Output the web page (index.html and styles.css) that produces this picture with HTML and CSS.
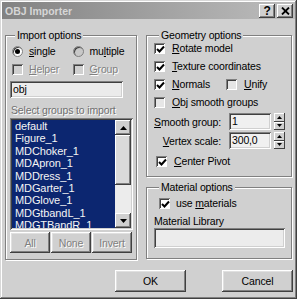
FILE: index.html
```html
<!DOCTYPE html>
<html>
<head>
<meta charset="utf-8">
<link rel="stylesheet" href="styles.css">
</head>
<body>
<div class="window">
  <div class="titlebar">
    <span class="title">OBJ Importer</span>
    <div class="tbtns">
      <span class="tbtn q">?</span>
      <span class="tbtn"><svg width="9" height="8" viewBox="0 0 9 8"><path d="M1 0.5 L8 7.5 M8 0.5 L1 7.5" stroke="#000" stroke-width="1.8" fill="none"/></svg></span>
    </div>
  </div>
  <div class="content">
    <div class="group left">
      <div class="legend">Import options</div>
      <div class="row r-radio">
        <div class="opt"><span class="radio on"></span><span><u>s</u>ingle</span></div>
        <div class="opt"><span class="radio"></span><span>mu<u>l</u>tiple</span></div>
      </div>
      <div class="row r-check">
        <div class="opt"><span class="cb dis"></span><span class="distext"><u>H</u>elper</span></div>
        <div class="opt"><span class="cb dis"></span><span class="distext"><u>G</u>roup</span></div>
      </div>
      <div class="field objfield">obj</div>
      <div class="sel distext">Select groups to import</div>
      <div class="list">
        <div class="items">
          <div class="item">default</div>
          <div class="item">Figure_1</div>
          <div class="item">MDChoker_1</div>
          <div class="item">MDApron_1</div>
          <div class="item">MDDress_1</div>
          <div class="item">MDGarter_1</div>
          <div class="item">MDGlove_1</div>
          <div class="item">MDGtbandL_1</div>
          <div class="item">MDGTBandR_1</div>
        </div>
        <div class="sbar">
          <div class="sbtn"><svg width="7" height="4" viewBox="0 0 7 4"><path d="M0 4 L3.5 0 L7 4 Z" fill="#000"/></svg></div>
          <div class="thumb"></div>
          <div class="track"></div>
          <div class="sbtn"><svg width="7" height="4" viewBox="0 0 7 4"><path d="M0 0 L3.5 4 L7 0 Z" fill="#000"/></svg></div>
        </div>
      </div>
      <div class="lbtns">
        <div class="btn small distext">All</div>
        <div class="btn small distext">None</div>
        <div class="btn small distext">Invert</div>
      </div>
    </div>
    <div class="rightcol">
      <div class="group geo">
        <div class="legend">Geometry options</div>
        <div class="row gr"><span class="cb"><svg width="9" height="9" viewBox="0 0 9 9"><path d="M1 4 L3.5 6.5 L8 1.5" stroke="#000" stroke-width="2" fill="none"/></svg></span><span><u>R</u>otate model</span></div>
        <div class="row gr"><span class="cb"><svg width="9" height="9" viewBox="0 0 9 9"><path d="M1 4 L3.5 6.5 L8 1.5" stroke="#000" stroke-width="2" fill="none"/></svg></span><span><u>T</u>exture coordinates</span></div>
        <div class="row gr">
          <div class="gopt"><span class="cb"><svg width="9" height="9" viewBox="0 0 9 9"><path d="M1 4 L3.5 6.5 L8 1.5" stroke="#000" stroke-width="2" fill="none"/></svg></span><span><u>N</u>ormals</span></div>
          <div class="gopt"><span class="cb light"></span><span><u>U</u>nify</span></div>
        </div>
        <div class="row gr"><span class="cb light"></span><span><u>O</u>bj smooth groups</span></div>
        <div class="srow first">
          <span class="slabel"><u>S</u>mooth group:</span>
          <span class="field spin">1</span>
          <span class="spinner"><span class="sp"><svg width="5" height="3" viewBox="0 0 5 3"><path d="M0 3 L2.5 0 L5 3 Z" fill="#000"/></svg></span><span class="sp"><svg width="5" height="3" viewBox="0 0 5 3"><path d="M0 0 L2.5 3 L5 0 Z" fill="#000"/></svg></span></span>
        </div>
        <div class="srow">
          <span class="slabel"><u>V</u>ertex scale:</span>
          <span class="field spin">300,0</span>
          <span class="spinner"><span class="sp"><svg width="5" height="3" viewBox="0 0 5 3"><path d="M0 3 L2.5 0 L5 3 Z" fill="#000"/></svg></span><span class="sp"><svg width="5" height="3" viewBox="0 0 5 3"><path d="M0 0 L2.5 3 L5 0 Z" fill="#000"/></svg></span></span>
        </div>
        <div class="row gr pivot"><span class="cb"><svg width="9" height="9" viewBox="0 0 9 9"><path d="M1 4 L3.5 6.5 L8 1.5" stroke="#000" stroke-width="2" fill="none"/></svg></span><span><u>C</u>enter Pivot</span></div>
      </div>
      <div class="group mat">
        <div class="legend">Material options</div>
        <div class="row gr usemat"><span class="cb"><svg width="9" height="9" viewBox="0 0 9 9"><path d="M1 4 L3.5 6.5 L8 1.5" stroke="#000" stroke-width="2" fill="none"/></svg></span><span>use <u>m</u>aterials</span></div>
        <div class="mlabel">Material Library</div>
        <div class="field mfield"></div>
      </div>
    </div>
  </div>
  <div class="footer">
    <div class="btn big">OK</div>
    <div class="btn big">Cancel</div>
  </div>
</div>
</body>
</html>
```

FILE: styles.css
```css
* { box-sizing: border-box; }
body {
  margin: 0;
  background: #d0d0d0;
  font-family: "Liberation Sans", Arial, sans-serif;
  font-size: 10.5px;
  letter-spacing: -0.15px;
  color: #000;
}
u { text-decoration: underline; text-underline-offset: 1px; }
.window {
  width: 297px;
  height: 299px;
  padding: 2px;
  background: #d0d0d0;
  box-shadow: inset -1px -1px #404040, inset 1px 1px #d8d8d8, inset -2px -2px #808080, inset 2px 2px #fff;
  display: flex;
  flex-direction: column;
}
.titlebar {
  height: 17px;
  flex: none;
  background: linear-gradient(to right, #828282, #bdbdbd);
  display: flex;
  align-items: center;
  justify-content: space-between;
  padding: 0 2px 0 3px;
}
.title { color: #d6d6d6; font-weight: bold; font-size: 10.5px; letter-spacing: 0; }
.tbtns { display: flex; gap: 2px; }
.tbtn {
  width: 16px;
  height: 14px;
  background: #d0d0d0;
  box-shadow: inset -1px -1px #404040, inset 1px 1px #fff, inset -2px -2px #808080;
  display: flex;
  align-items: center;
  justify-content: center;
  font-weight: bold;
  font-size: 12px;
  line-height: 14px;
}
.content {
  display: flex;
  gap: 9px;
  padding: 16px 3px 0;
  height: 241px;
  flex: none;
}
.group {
  border: 1px solid #808080;
  box-shadow: inset 1px 1px #fff, 1px 1px #fff;
  display: flex;
  flex-direction: column;
}
.legend {
  align-self: flex-start;
  margin: -7px 0 0 5px;
  padding: 0 2px;
  background: #d0d0d0;
  line-height: 13px;
  height: 13px;
}
.left {
  width: 132px;
  height: 225px;
  padding: 0 3px 0 4px;
}
.row { display: flex; align-items: center; height: 13px; line-height: 13px; }
.r-radio { margin-top: 3px; padding-left: 2px; }
.r-check { margin-top: 5px; padding-left: 2px; }
.opt { width: 61px; display: flex; align-items: center; gap: 6px; }
.radio {
  width: 11px;
  height: 11px;
  border-radius: 50%;
  background: #fff;
  border: 1px solid #808080;
  box-shadow: inset 1px 1px #404040;
  flex: none;
  display: flex;
  align-items: center;
  justify-content: center;
}
.radio.on::after {
  content: "";
  width: 5px;
  height: 5px;
  border-radius: 50%;
  background: #000;
}
.radio:not(.on) { background: #c8c8c8; }
.cb {
  width: 11px;
  height: 11px;
  flex: none;
  background: #fff;
  box-shadow: inset 1px 1px #808080, inset -1px -1px #fff, inset 2px 2px #404040;
  display: flex;
  align-items: center;
  justify-content: center;
}
.cb svg { margin: 1px 0 0 1px; }
.cb.dis { background: #d0d0d0; }
.cb.light { background: #e6e6e6; }
.distext { color: #808080; text-shadow: 1px 1px #fff; }
.field {
  background: #ebebeb;
  box-shadow: inset 1px 1px #808080, inset -1px -1px #fff, inset 2px 2px #404040, inset -2px -2px #d0d0d0;
  padding: 0 3px;
  line-height: 17px;
}
.objfield { width: 113px; height: 17px; margin-top: 5px; }
.sel { margin: 6px 0 0 1px; line-height: 13px; height: 13px; color: #707070; }
.list {
  margin-top: 1px;
  height: 112px;
  display: flex;
  padding: 2px;
  background: #0c2670;
  box-shadow: inset 1px 1px #808080, inset -1px -1px #fff, inset 2px 2px #404040, inset -2px -2px #d0d0d0;
}
.items { flex: 1; overflow: hidden; padding-left: 3px; }
.item { color: #f4f4f4; line-height: 12.4px; height: 12.4px; white-space: nowrap; font-size: 11px; letter-spacing: -0.1px; }
.sbar { width: 16px; display: flex; flex-direction: column; }
.sbtn {
  height: 15px;
  flex: none;
  background: #d0d0d0;
  box-shadow: inset -1px -1px #404040, inset 1px 1px #fff, inset -2px -2px #808080;
  display: flex;
  align-items: center;
  justify-content: center;
}
.thumb {
  height: 50px;
  background: #dadada;
  box-shadow: inset -1px -1px #404040, inset 1px 1px #fff, inset -2px -2px #808080;
}
.track { flex: 1; background: #ececec; }
.lbtns { display: flex; gap: 1px; margin-top: 2px; }
.btn {
  background: #d0d0d0;
  box-shadow: inset -1px -1px #404040, inset 1px 1px #fff, inset -2px -2px #808080, inset 2px 2px #e0e0e0;
  display: flex;
  align-items: center;
  justify-content: center;
}
.small { width: 40px; height: 21px; }
.rightcol { display: flex; flex-direction: column; width: 146px; }
.geo { height: 142px; padding: 0 0 0 7px; }
.gr { gap: 7px; }
.geo .gr:first-of-type { margin-top: 3px; }
.geo .gr + .gr { margin-top: 5px; }
.gopt { display: flex; align-items: center; gap: 7px; width: 74px; }
.srow { display: flex; align-items: center; height: 17px; margin-top: 2px; }
.srow.first { margin-top: 4px; }
.slabel { width: 67px; text-align: right; margin-right: 8px; white-space: nowrap; }
.spin { width: 42px; height: 17px; background: #f0f0f0; }
.spinner { display: flex; flex-direction: column; margin-left: 3px; width: 11px; height: 17px; }
.sp {
  flex: 1;
  background: #d0d0d0;
  box-shadow: inset -1px -1px #404040, inset 1px 1px #fff;
  display: flex;
  align-items: center;
  justify-content: center;
}
.pivot { margin-top: 6px; padding-left: 2px; }
.mat { height: 72px; margin-top: 10px; padding: 0 0 0 7px; }
.usemat { margin-top: 3px; padding-left: 5px; gap: 6px; }
.mlabel { margin-top: 5px; line-height: 13px; height: 13px; }
.mfield { width: 131px; height: 20px; background: #ececec; }
.footer {
  display: flex;
  justify-content: flex-end;
  gap: 36px;
  margin-top: 10px;
  padding-right: 2px;
}
.big { width: 71px; height: 22px; }
```
